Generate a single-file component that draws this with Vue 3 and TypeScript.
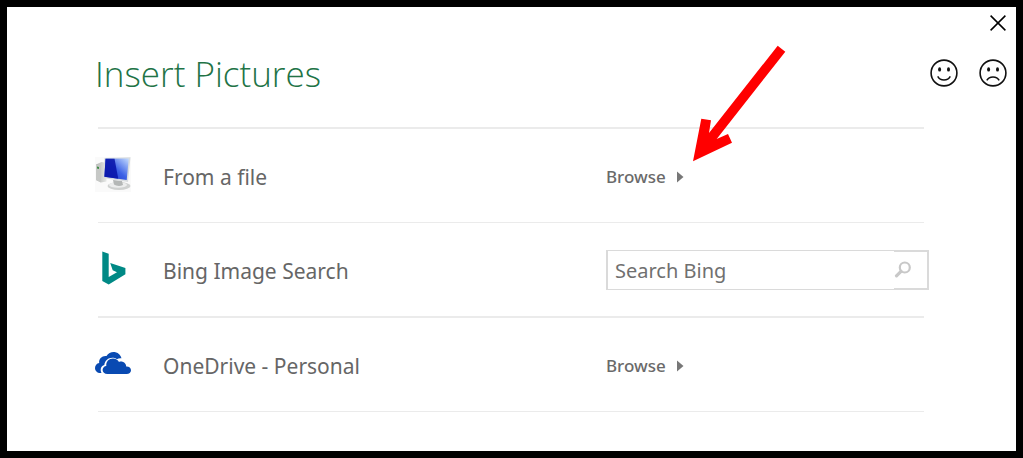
<script setup lang="ts">
import { ref } from 'vue'

const query = ref<string>('')
</script>

<template>
  <main class="dialog">
    <header class="titlebar">
      <button class="icon-button" type="button" aria-label="Close">
        <svg width="16" height="16" viewBox="0 0 16 16"><path d="M.6.600l14.800 14.800M15.400.6L.6 15.400" fill="none" stroke="#000" stroke-width="1.500" /></svg>
      </button>
    </header>

    <div class="heading">
      <h1>Insert Pictures</h1>
      <div class="feedback">
        <button class="icon-button" type="button" aria-label="Send a smile">
          <svg width="28" height="28" viewBox="0 0 28 28">
            <circle cx="14" cy="14" r="12.900" fill="none" stroke="#111" stroke-width="1.600" />
            <ellipse cx="9.600" cy="10.400" rx="1.500" ry="2.200" fill="#111" /><ellipse cx="18.500" cy="10.400" rx="1.500" ry="2.200" fill="#111" />
            <path d="M7.700 17.400c2.600 4.800 10 4.800 12.600 0" fill="none" stroke="#111" stroke-width="1.500" />
          </svg>
        </button>
        <button class="icon-button" type="button" aria-label="Send a frown">
          <svg width="28" height="28" viewBox="0 0 28 28">
            <circle cx="14" cy="14" r="12.900" fill="none" stroke="#111" stroke-width="1.600" />
            <ellipse cx="9.600" cy="10.400" rx="1.500" ry="2.200" fill="#111" /><ellipse cx="18.500" cy="10.400" rx="1.500" ry="2.200" fill="#111" />
            <path d="M7.800 21.400c2.400-4.600 10-4.600 12.400 0" fill="none" stroke="#111" stroke-width="1.500" />
          </svg>
        </button>
      </div>
    </div>

    <ul class="sources">
      <li class="source thick">
        <svg class="logo" width="36" height="36" viewBox="0 0 36 36" aria-hidden="true">
          <defs>
            <linearGradient id="screen" x1="0" y1="1" x2="1" y2="0">
              <stop offset="0" stop-color="#1a2fc0" /><stop offset=".5" stop-color="#3d62e6" /><stop offset="1" stop-color="#c4dcff" />
            </linearGradient>
            <linearGradient id="tower" x1="0" y1="0" x2="1" y2="0">
              <stop offset="0" stop-color="#b4b6b4" /><stop offset="1" stop-color="#e6e8e6" />
            </linearGradient>
          </defs>
          <rect width="36" height="35" fill="#fafafa" />
          <path d="M1 7.500L6.500 5l5 1v18.500L6 25.500 1 23z" fill="url(#tower)" />
          <path d="M1 7.500l5 1.300V25.500L1 23z" fill="#c6c8c6" />
          <path d="M2 9.500l2 .6v2L2 11.500z" fill="#3f8a45" />
          <ellipse cx="24" cy="29" rx="11.500" ry="4" fill="#cfd1d0" />
          <ellipse cx="23" cy="28" rx="9" ry="2.700" fill="#eceded" />
          <path d="M18 23l9 1 1 4c-3 1.500-7 1-9-.5z" fill="#b4b7b6" />
          <path d="M9.500 1L35.500.2 33 25 8.200 21z" fill="#d8dcdf" />
          <path d="M10.500 1.800L33.800 1.600 31.700 23 9.400 19.800z" fill="url(#screen)" />
          <path d="M10.500 1.800l9-.1 3.800 20L9.400 19.800z" fill="#0713a8" opacity=".85" />
        </svg>
        <span class="name">From a file</span>
        <span class="action"><button class="browse" type="button">Browse<svg width="7" height="12" viewBox="0 0 7 12"><path d="M0 .5L6.500 6 0 11.500z" fill="#777" /></svg></button>
          <svg class="pointer" width="93" height="117" viewBox="0 0 93 117" aria-hidden="true"><path d="M84.700.7l7.600 6-68.600 87.300 11.300-5 4 8.700L0 116.300 8.300 73.700l9.700 1.600-2 12.700z" fill="#f00" /></svg>
        </span>
      </li>
      <li class="source">
        <svg class="logo" width="36" height="36" viewBox="0 0 36 36" aria-hidden="true"><path d="M7.300.5l6.400 2.300v23.300l8.300-4.800-4.300-2-2.500-7.300L30.400 17v6.200L13.700 33.500l-6.400-3.600z" fill="#008985" /></svg>
        <label class="name" for="bing">Bing Image Search</label>
        <form class="search" @submit.prevent>
          <input id="bing" v-model="query" type="text" placeholder="Search Bing" />
          <button type="submit" aria-label="Search">
            <svg width="17" height="17" viewBox="0 0 17 17"><circle cx="10.800" cy="6.500" r="5" fill="none" stroke="#c8c8c8" stroke-width="2.200" /><path d="M7 10.300L2.500 14.800" stroke="#c8c8c8" stroke-width="3.200" stroke-linecap="round" /></svg>
          </button>
        </form>
      </li>
      <li class="source thick">
        <svg class="logo" width="36" height="36" viewBox="0 0 36 36" aria-hidden="true">
          <path d="M6.500 27C2.500 27.500 0 25 0 22c0-2.500 1.700-4.600 4.200-5C3.500 12.500 7.500 9.300 11.500 10 13.500 7 17 5.500 20.500 6.300c3.200.7 5.300 3 6 6-2-.2-3.500.2-4.500.9C17 9.700 10 12.500 9.300 19 5.500 20 5 24 6.500 27z" fill="#094ab2" />
          <path d="M12.500 28C9.500 28 7.600 26.200 7.600 24c0-2.200 1.700-3.800 3.700-3.900-.5-4.500 2.700-7.600 6.700-7.600 2.700 0 4.800 1.300 6 3.400 3.800-1.200 7.200 1.300 7.200 4.700 2.800-.2 4.800 1.500 4.800 3.700S34.200 28 31.600 28z" fill="#094ab2" />
        </svg>
        <span class="name">OneDrive - Personal</span>
        <span class="action"><button class="browse" type="button">Browse<svg width="7" height="12" viewBox="0 0 7 12"><path d="M0 .5L6.500 6 0 11.500z" fill="#777" /></svg></button></span>
      </li>
    </ul>
  </main>
</template>

<style>
body {
  margin: 0;
  background: #000;
}
</style>

<style scoped>
.dialog {
  box-sizing: border-box;
  min-height: 100vh;
  border: 7px solid #000;
  background: #fff;
  color: #666;
  font-family: "Noto Sans", "Open Sans", sans-serif;
}

button {
  padding: 0;
  border: 0;
  background: none;
  font: inherit;
  color: inherit;
}

svg {
  display: block;
}

.titlebar {
  display: flex;
  justify-content: flex-end;
  padding: 8px 10px 0;
}

.heading {
  display: flex;
  box-sizing: border-box;
  justify-content: space-between;
  align-items: center;
  height: 96px;
  padding: 0 9px 10px 88px;
}

h1 {
  margin: 0;
  color: #217346;
  font-family: "Open Sans", "Noto Sans", sans-serif;
  font-size: 35px;
  font-weight: 300;
  line-height: 48px;
}

.feedback {
  display: flex;
  gap: 21px;
  margin-bottom: 2px;
}

.sources {
  margin: 0;
  padding: 0 87px 0 88px;
  list-style: none;
}

.source {
  position: relative;
  display: grid;
  box-sizing: border-box;
  grid-template-columns: 68px 1fr 323px;
  align-items: center;
  height: 94px;
  padding-top: 1px;
}

.source.thick {
  height: 95px;
  padding-top: 2px;
}

.source::before,
.source:last-child::after {
  position: absolute;
  top: 0;
  right: 5px;
  left: 3px;
  height: 1px;
  background: #ebebeb;
  content: "";
}

.source.thick::before {
  height: 2px;
}

.source:last-child::after {
  top: auto;
  bottom: -1px;
}

.logo {
  margin-bottom: 2px;
}

.name {
  padding-top: 3px;
  font-size: 21px;
  line-height: 30px;
}

.action {
  position: relative;
  padding-top: 3px;
}

.browse {
  display: flex;
  align-items: center;
  gap: 11px;
  color: #6a6a6a;
  font-size: 17px;
  font-weight: 500;
  line-height: 24px;
}

.pointer {
  position: absolute;
  bottom: 27px;
  left: 87px;
}

.search {
  display: flex;
  box-sizing: border-box;
  height: 40px;
  border: 1px solid #dadada;
  border-width: 1px 2px;
}

.search input {
  flex: 1;
  min-width: 0;
  padding: 3px 7px 0;
  border: 0;
  outline: 0;
  background: none;
  color: #666;
  font: 20px/30px "Noto Sans", "Open Sans", sans-serif;
}

.search input::placeholder {
  color: #707070;
  opacity: 1;
}

.search button {
  width: 33px;
  border: solid #dadada;
  border-width: 1px 0;
}
</style>
